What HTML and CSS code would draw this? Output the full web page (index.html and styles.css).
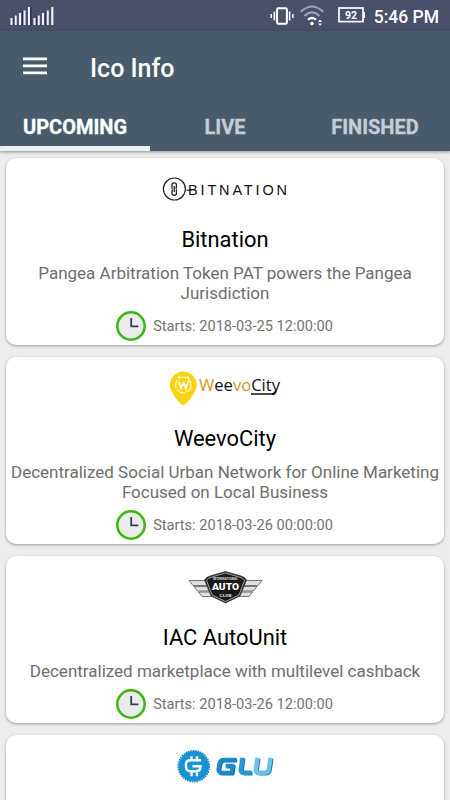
FILE: index.html
```html
<!DOCTYPE html>
<html lang="en">
<head>
    <meta charset="UTF-8">
    <meta name="viewport" content="width=device-width, initial-scale=1.0">
    <title>Ico Info</title>
    <link rel="stylesheet" href="styles.css">
</head>
<body>
    <div class="status-bar">
        <svg class="signal" width="44" height="18" viewBox="0 0 44 18">
            <path d="M4 8.5v9.5M12.8 4v14M20.8 0v18M27 8.5v9.5M36 4v14" stroke="#161d5e" stroke-width="1.2"/>
            <path d="M1.5 11v7M5.7 8.5V18M10 6v12M14.5 3.5V18M19 0v18M24.5 11v7M28.7 8.5V18M33 6v12M37.7 3.5V18M42.3 0v18" stroke="#f1f1f4" stroke-width="2.1"/>
        </svg>
        <div class="status-right">
            <svg class="vibrate" width="24" height="18" viewBox="0 0 24 18" fill="none" stroke="#fff">
                <rect x="7.1" y="1.2" width="9.8" height="15.6" rx="1.2" stroke-width="2"/>
                <path d="M4.4 4.5v9M19.6 4.5v9" stroke-width="1.6"/>
                <path d="M1.2 7v4M22.8 7v4" stroke-width="1.6"/>
            </svg>
            <svg class="wifi" width="24" height="21" viewBox="0 0 24 21" fill="none">
                <path d="M.8 6.8Q12-3.8 23.2 6.8" stroke="#a0a2b7" stroke-width="2"/>
                <path d="M4.4 11Q12 3.8 19.4 11" stroke="#a0a2b7" stroke-width="2"/>
                <path d="M8 14.8q4-3.6 8 0" stroke="#fff" stroke-width="2.2"/>
                <circle cx="12" cy="18.5" r="1.8" fill="#fff"/>
                <path d="M18 17l2-2.4 2 2.4zM18 18.4l2 2.4 2-2.4z" fill="#fff"/>
            </svg>
            <svg class="battery" width="27" height="16" viewBox="0 0 27 16">
                <rect x="1" y="1" width="24" height="13.6" fill="none" stroke="#fff" stroke-width="1.7"/>
                <rect x="25.5" y="5" width="1.5" height="6" fill="#fff"/>
                <text x="13" y="11.6" class="battery-text" text-anchor="middle">92</text>
            </svg>
            <span class="time">5:46 PM</span>
        </div>
    </div>

    <header class="app-bar">
        <div class="toolbar">
            <svg class="menu" width="24" height="18" viewBox="0 0 24 18" fill="#fff">
                <path d="M0 .5h24v2.8H0zM0 7.5h24v2.8H0zM0 14.4h24v2.8H0z"/>
            </svg>
            <h1>Ico Info</h1>
        </div>
        <nav class="tabs">
            <div class="tab active">UPCOMING</div>
            <div class="tab">LIVE</div>
            <div class="tab">FINISHED</div>
        </nav>
    </header>

    <main class="list">
        <div class="card">
            <svg class="logo" width="150" height="50" viewBox="0 0 150 50">
                <circle cx="24.4" cy="25" r="11" fill="none" stroke="#222" stroke-width="1.2"/>
                <path d="M22.6 24.3h-.6v-3.7q0-1.8 2.2-1.8t2.2 1.8v2.8q0 .9-.9.9M24.2 22v6M25.8 25.9h.6v3.7q0 1.8-2.2 1.8t-2.2-1.8v-2.8q0-.9.9-.9" fill="none" stroke="#222" stroke-width="1.3"/>
                <path d="M36.5 26.2h5" stroke="#111" stroke-width="1.1"/>
                <text x="38" y="30.5" class="bitnation" textLength="99">BITNATION</text>
            </svg>
            <h2>Bitnation</h2>
            <p>Pangea Arbitration Token PAT powers the Pangea Jurisdiction</p>
            <div class="starts">
                <svg class="clock" width="30" height="30" viewBox="0 0 30 30">
                    <circle cx="15" cy="15" r="13.7" fill="#ebebeb" stroke="#38b80e" stroke-width="2.5"/>
                    <path d="M15.2 7v8.3h7.2" fill="none" stroke="#2c4254" stroke-width="1.8"/>
                </svg>
                <span>Starts: 2018-03-25 12:00:00</span>
            </div>
        </div>

        <div class="card">
            <svg class="logo" width="150" height="50" viewBox="0 0 150 50">
                <path d="M33.3 42.2c-2.4 0-13.4-13-13.4-20.2a13.4 13.4 0 0 1 26.8 0c0 7.2-11 20.2-13.4 20.2z" fill="#fbd30d"/>
                <circle cx="33.3" cy="22" r="7.8" fill="none" stroke="#fffbe0" stroke-width="1.2" stroke-dasharray="9 1.5"/>
                <path d="M29 18.8l2 6.5 2.8-5.5 2 5.5 3-7.5M28 14.8l2-1.5M37 13.8l2 1.5" fill="none" stroke="#fff" stroke-width="1.7"/>
                <text x="49" y="27.5" class="weevo" textLength="81" lengthAdjust="spacingAndGlyphs"><tspan fill="#cb9a20">W</tspan>ee<tspan fill="#cb9a20">vo</tspan>City</text>
                <path d="M101 31h20q3.5 0 5-3.5" fill="none" stroke="#111" stroke-width="1.5"/>
            </svg>
            <h2>WeevoCity</h2>
            <p>Decentralized Social Urban Network for Online Marketing Focused on Local Business</p>
            <div class="starts">
                <svg class="clock" width="30" height="30" viewBox="0 0 30 30">
                    <circle cx="15" cy="15" r="13.7" fill="#ebebeb" stroke="#38b80e" stroke-width="2.5"/>
                    <path d="M15.2 7v8.3h7.2" fill="none" stroke="#2c4254" stroke-width="1.8"/>
                </svg>
                <span>Starts: 2018-03-26 00:00:00</span>
            </div>
        </div>

        <div class="card">
            <svg class="logo" width="150" height="50" viewBox="0 0 150 50">
                <g fill="#dedede" stroke="#666" stroke-width=".9" stroke-linejoin="round">
                    <path d="M39 18.500h19v5H43zM44 24.500h16v4.500H47.500zM48.500 30H62v4.500H52z"/>
                    <path d="M112 18.500H93v5h15zM107 24.500H91v4.500h12.500zM102.500 30H89v4.500h10z"/>
                </g>
                <path d="M75.5 9.5L91 14q4 1 5.5 4L90 34 75.5 41 61 34 54.5 18q1.5-3 5.5-4z" fill="#191919" stroke="#444" stroke-width=".8"/>
                <path d="M75.5 11L90 15.3q3 .7 4.5 3L89 33l-13.5 6.5L62 33l-5.5-14.7q1.5-2.3 4.5-3z" fill="none" stroke="#c4c4c4" stroke-width=".8"/>
                <text x="75.5" y="18.3" class="auto-small" textLength="25" lengthAdjust="spacingAndGlyphs">INTERNATIONAL</text>
                <text x="75.5" y="28.4" class="auto" textLength="27" lengthAdjust="spacingAndGlyphs">AUTO</text>
                <text x="75.5" y="34.5" class="auto-small" textLength="12" lengthAdjust="spacingAndGlyphs">CLUB</text>
            </svg>
            <h2>IAC AutoUnit</h2>
            <p>Decentralized marketplace with multilevel cashback</p>
            <div class="starts">
                <svg class="clock" width="30" height="30" viewBox="0 0 30 30">
                    <circle cx="15" cy="15" r="13.7" fill="#ebebeb" stroke="#38b80e" stroke-width="2.5"/>
                    <path d="M15.2 7v8.3h7.2" fill="none" stroke="#2c4254" stroke-width="1.8"/>
                </svg>
                <span>Starts: 2018-03-26 12:00:00</span>
            </div>
        </div>

        <div class="card card-last">
            <svg class="logo" width="150" height="50" viewBox="0 0 150 50">
                <circle cx="43.8" cy="25.3" r="15.3" fill="#1593d4"/>
                <circle cx="43.8" cy="25.3" r="15.7" fill="none" stroke="#1178b3" stroke-width="1.2" stroke-dasharray="1.5 1"/>
                <path d="M51 19.3H40.5q-4.500 0-4.500 4v2.500q0 4.500 4.500 4.500h5.500q4.500 0 4.500-5h-8M41.500 19.300v-4M47 19.300v-4M41.500 30.300v5M47 30.300v5" fill="none" stroke="#fff" stroke-width="2.4"/>
                <g fill="none" stroke-width="4" stroke-linejoin="round">
                    <path d="M86 18.8H74q-4 0-4.700 4l-.8 5q-.4 4 3.500 4h9.500l1.200-7h-7" stroke="#15669e" transform="translate(1 .8)"/>
                    <path d="M86 18.8H74q-4 0-4.700 4l-.8 5q-.4 4 3.500 4h9.500l1.200-7h-7" stroke="#1b8bcb"/>
                    <path d="M92.500 16.800l-1.600 11q-.5 4 3 4h7.600" stroke="#1a6ea6" transform="translate(1 .8)"/>
                    <path d="M92.500 16.800l-1.600 11q-.5 4 3 4h7.600" stroke="#2798d3" stroke-width="4.5"/>
                    <path d="M107.500 16.800l-1.600 11q-.5 4 3 4h5.500q4 0 4.500-4l1.600-11" stroke="#286389" transform="translate(1 .8)"/>
                    <path d="M107.500 16.800l-1.600 11q-.5 4 3 4h5.500q4 0 4.500-4l1.600-11" stroke="#68c4e9" stroke-width="4.5"/>
                </g>
            </svg>
        </div>
    </main>
</body>
</html>
```
FILE: styles.css
```css
* {
    box-sizing: border-box;
}

body {
    display: flex;
    flex-direction: column;
    margin: 0;
    height: 100vh;
    overflow: hidden;
    background-color: #ededed;
    font-family: Roboto, "Liberation Sans", sans-serif;
}

h1, h2, p {
    margin: 0;
}

svg {
    display: block;
    flex-shrink: 0;
}

/* Status bar */
.status-bar {
    display: flex;
    flex-shrink: 0;
    justify-content: space-between;
    height: 31px;
    padding: 0 11px 0 10px;
    background-color: #4a4f6b;
    color: #fff;
}

.signal {
    margin-top: 7px;
}

.status-right {
    display: flex;
}

.vibrate {
    margin: 7px 6px 0 0;
}

.wifi {
    margin: 5px 14px 0 0;
}

.battery {
    margin: 7px 9px 0 0;
}

.battery-text {
    font-size: 10.5px;
    font-weight: 700;
    fill: #fff;
}

.time {
    font-size: 17.5px;
    font-weight: 500;
    line-height: 34px;
}

/* App bar and tabs */
.app-bar {
    flex-shrink: 0;
    height: 120px;
    background-color: #475b6b;
    color: #fff;
    box-shadow: 0 1px 3px rgba(0, 0, 0, 0.4);
}

.toolbar {
    display: flex;
    align-items: center;
    height: 72px;
    padding-left: 23px;
}

.menu {
    margin: -3px 43px 0 0;
}

h1 {
    font-size: 25px;
    font-weight: 500;
    line-height: 30px;
    padding-top: 3px;
}

.tabs {
    display: flex;
    height: 48px;
}

.tab {
    flex: 1;
    text-align: center;
    font-size: 20px;
    font-weight: 700;
    line-height: 48px;
    color: #c7ccd3;
    -webkit-text-stroke: 0.3px;
}

.tab.active {
    color: #fff;
    border-bottom: 5px solid #ecf0f1;
}

/* Cards */
.list {
    display: flex;
    flex: 1;
    flex-direction: column;
    gap: 12px;
    padding: 7px 6px 0;
}

.card {
    display: flex;
    flex-direction: column;
    align-items: center;
    padding: 6px 4px 4px;
    background-color: #fff;
    border-radius: 10px;
    box-shadow: 0 1px 3px rgba(0, 0, 0, 0.35);
}

/* runs off the bottom of the screen */
.card-last {
    flex: 1;
    border-radius: 10px 10px 0 0;
}

h2 {
    margin-top: 12px;
    font-size: 21.9px;
    font-weight: 400;
    line-height: 28px;
    color: #000;
}

p {
    margin-top: 9px;
    font-size: 17px;
    line-height: 20px;
    text-align: center;
    color: #6e6e6e;
}

.starts {
    display: flex;
    align-items: center;
    margin-top: 8px;
    padding-right: 1px;
    font-size: 14.6px;
    color: #737373;
}

.clock {
    margin-right: 7px;
}

/* Logo lettering */
.bitnation {
    font-family: "Liberation Sans", sans-serif;
    font-size: 14.5px;
    fill: #111;
}

.weevo {
    font-family: "Open Sans", sans-serif;
    font-size: 16px;
    font-weight: 500;
    fill: #111;
}

.auto,
.auto-small {
    font-size: 9.5px;
    font-weight: 900;
    text-anchor: middle;
    fill: #fff;
}

.auto-small {
    font-size: 4px;
    fill: #ccc;
}
```
